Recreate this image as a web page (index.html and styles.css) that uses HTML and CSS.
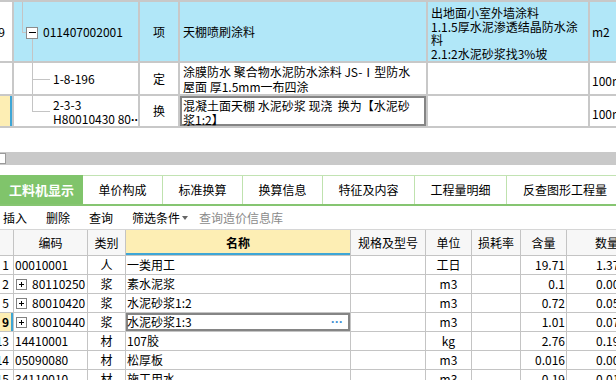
FILE: index.html
```html
<!DOCTYPE html>
<html lang="zh-CN">
<head>
    <meta charset="UTF-8">
    <meta name="viewport" content="width=device-width, initial-scale=1.0">
    <title>工料机显示</title>
    <link rel="stylesheet" href="styles.css">
</head>
<body>
    <!-- 清单 / 定额 -->
    <div class="qd-grid">
        <div class="cell rn">19</div>
        <div class="cell blue tree-cell">
            <svg class="tree" width="29" height="59">
                <line x1="8.5" y1="0" x2="8.5" y2="30.5" stroke="#c4c4c4"/>
                <line x1="8" y1="30.5" x2="12" y2="30.5" stroke="#c4c4c4"/>
                <line x1="18.5" y1="36.5" x2="18.5" y2="59" stroke="#c4c4c4"/>
                <rect x="12.5" y="25.5" width="11" height="11" fill="#fff" stroke="#8c8c8c"/>
                <line x1="15" y1="30.5" x2="22" y2="30.5" stroke="#000"/>
            </svg>
            <span>011407002001</span>
        </div>
        <div class="cell blue center">项</div>
        <div class="cell blue">天棚喷刷涂料</div>
        <div class="cell blue feature">
            <div class="lines">
                <div>出地面小室外墙涂料</div>
                <div>1.1.5厚水泥渗透结晶防水涂</div>
                <div>料</div>
                <div>2.1:2水泥砂浆找3%坡</div>
            </div>
        </div>
        <div class="cell blue unit">m2</div>

        <div class="cell rn"></div>
        <div class="cell tree-cell">
            <svg class="tree" width="39" height="31">
                <line x1="18.5" y1="0" x2="18.5" y2="31" stroke="#c4c4c4"/>
                <line x1="18" y1="16.5" x2="36" y2="16.5" stroke="#c4c4c4"/>
            </svg>
            <span>1-8-196</span>
        </div>
        <div class="cell center">定</div>
        <div class="cell desc">
            <div class="lines">
                <div>涂膜防水 聚合物水泥防水涂料 JS-Ⅰ型防水</div>
                <div>屋面 厚1.5mm一布四涂</div>
            </div>
        </div>
        <div class="cell"></div>
        <div class="cell unit low">100m2</div>

        <div class="cell rn current"></div>
        <div class="cell tree-cell">
            <svg class="tree" width="39" height="30">
                <line x1="18.5" y1="0" x2="18.5" y2="15.5" stroke="#c4c4c4"/>
                <line x1="18" y1="15.5" x2="36" y2="15.5" stroke="#c4c4c4"/>
            </svg>
            <div class="lines two">
                <div>2-3-3</div>
                <div>H80010430 80<span class="dots">···</span></div>
            </div>
        </div>
        <div class="cell center">换</div>
        <div class="cell desc focus">
            <div class="lines two">
                <div>混凝土面天棚 水泥砂浆 现浇&nbsp; 换为【水泥砂</div>
                <div>浆1:2】</div>
            </div>
        </div>
        <div class="cell"></div>
        <div class="cell unit low">100m2</div>
    </div>

    <div class="hscroll"><span class="thumb"></span></div>

    <div class="tabs">
        <div class="tab active">工料机显示</div>
        <div class="tab">单价构成</div>
        <div class="tab">标准换算</div>
        <div class="tab">换算信息</div>
        <div class="tab wide">特征及内容</div>
        <div class="tab wide">工程量明细</div>
        <div class="tab wider">反查图形工程量</div>
    </div>

    <div class="toolbar">
        <span class="tool">插入</span>
        <span class="tool">删除</span>
        <span class="tool">查询</span>
        <span class="tool filter">筛选条件<i class="caret"></i></span>
        <span class="tool muted">查询造价信息库</span>
    </div>

    <!-- 工料机 -->
    <div class="glj-grid">
        <div class="h"></div>
        <div class="h">编码</div>
        <div class="h">类别</div>
        <div class="h name-h">名称</div>
        <div class="h">规格及型号</div>
        <div class="h">单位</div>
        <div class="h">损耗率</div>
        <div class="h">含量</div>
        <div class="h">数量</div>

        <div class="d rn">1</div>
        <div class="d code">00010001</div>
        <div class="d c">人</div>
        <div class="d name">一类用工</div>
        <div class="d"></div>
        <div class="d c">工日</div>
        <div class="d"></div>
        <div class="d r">19.71</div>
        <div class="d qty">1.379</div>

        <div class="d rn">2</div>
        <div class="d code"><svg class="plus" width="11" height="11"><rect x="0.5" y="0.5" width="10" height="10" fill="#fff" stroke="#808080"/><line x1="3" y1="5.5" x2="8" y2="5.5" stroke="#000"/><line x1="5.5" y1="3" x2="5.5" y2="8" stroke="#000"/></svg>80110250</div>
        <div class="d c">浆</div>
        <div class="d name">素水泥浆</div>
        <div class="d"></div>
        <div class="d c">m3</div>
        <div class="d"></div>
        <div class="d r">0.1</div>
        <div class="d qty">0.007</div>

        <div class="d rn">5</div>
        <div class="d code"><svg class="plus" width="11" height="11"><rect x="0.5" y="0.5" width="10" height="10" fill="#fff" stroke="#808080"/><line x1="3" y1="5.5" x2="8" y2="5.5" stroke="#000"/><line x1="5.5" y1="3" x2="5.5" y2="8" stroke="#000"/></svg>80010420</div>
        <div class="d c">浆</div>
        <div class="d name">水泥砂浆1:2</div>
        <div class="d"></div>
        <div class="d c">m3</div>
        <div class="d"></div>
        <div class="d r">0.72</div>
        <div class="d qty">0.050</div>

        <div class="d rn current">9</div>
        <div class="d code"><svg class="plus" width="11" height="11"><rect x="0.5" y="0.5" width="10" height="10" fill="#fff" stroke="#808080"/><line x1="3" y1="5.5" x2="8" y2="5.5" stroke="#000"/><line x1="5.5" y1="3" x2="5.5" y2="8" stroke="#000"/></svg>80010440</div>
        <div class="d c">浆</div>
        <div class="d name focus">水泥砂浆1:3<span class="more">···</span></div>
        <div class="d"></div>
        <div class="d c">m3</div>
        <div class="d"></div>
        <div class="d r">1.01</div>
        <div class="d qty">0.071</div>

        <div class="d rn">13</div>
        <div class="d code">14410001</div>
        <div class="d c">材</div>
        <div class="d name">107胶</div>
        <div class="d"></div>
        <div class="d c">kg</div>
        <div class="d"></div>
        <div class="d r">2.76</div>
        <div class="d qty">0.193</div>

        <div class="d rn">14</div>
        <div class="d code">05090080</div>
        <div class="d c">材</div>
        <div class="d name">松厚板</div>
        <div class="d"></div>
        <div class="d c">m3</div>
        <div class="d"></div>
        <div class="d r">0.016</div>
        <div class="d qty">0.001</div>

        <div class="d rn">15</div>
        <div class="d code">34110010</div>
        <div class="d c">材</div>
        <div class="d name">施工用水</div>
        <div class="d"></div>
        <div class="d c">m3</div>
        <div class="d"></div>
        <div class="d r">0.19</div>
        <div class="d qty">0.013</div>
    </div>
</body>
</html>
```

FILE: styles.css
```css
* {
    box-sizing: border-box;
}
body {
    margin: 0;
    width: 616px;
    height: 380px;
    overflow: hidden;
    background: #fff;
    color: #000;
    font-family: "Noto Sans CJK SC", "Liberation Sans", sans-serif;
    font-size: 12px;
    line-height: 14px;
}

/* top grid */
.qd-grid {
    display: grid;
    grid-template-columns: 12px 124px 38px 246px 160px 40px;
    grid-template-rows: 59px 31px 30px;
    gap: 2px;
    padding: 2px 0;
    width: max-content;
    background: #c8c8c8;
}
.cell {
    display: flex;
    align-items: center;
    min-width: 0;
    overflow: hidden;
    white-space: nowrap;
    padding: 0 3px;
    background: #fff;
}
.cell.blue {
    background: #b1e7f8;
}
.cell.center {
    justify-content: center;
}
.cell.rn {
    justify-content: flex-end;
    padding: 0 7px 0 0;
}
.cell.rn.current {
    background: #fdeeb4;
    box-shadow: inset -2px 0 0 #3ea6d6;
}
.tree-cell {
    padding: 0;
}
.tree {
    display: block;
    flex-shrink: 0;
}
.lines.two {
    padding-top: 3px;
}
.dots {
    font-family: "Liberation Sans", sans-serif;
    font-weight: bold;
    letter-spacing: -0.5px;
}
.feature {
    align-items: flex-start;
    padding-top: 4px;
    line-height: 13.5px;
}
.desc .lines {
    line-height: 15px;
}
.desc .lines.two {
    line-height: 14px;
}
.cell.focus {
    box-shadow: inset 0 0 0 2px #858585;
}
.unit {
    padding-left: 2px;
}
.unit.low {
    padding-top: 5px;
}

/* scrollbar */
.hscroll {
    display: flex;
    align-items: center;
    height: 13px;
    margin-top: 24px;
    background: #c9c9c9;
}
.thumb {
    width: 6px;
    height: 11px;
    background: #fff;
    border: 1px solid #9a9a9a;
    border-left: none;
}

/* tabs */
.tabs {
    display: flex;
    height: 31px;
    margin-top: 10px;
    border-top: 1px solid #c2e3b3;
    border-bottom: 2px solid #86c571;
}
.tab {
    display: flex;
    align-items: center;
    justify-content: center;
    flex-shrink: 0;
    width: 80px;
    border-right: 1px solid #bfe2ae;
    font-size: 12px;
}
.tab.wide {
    width: 92px;
}
.tab.wider {
    width: 116px;
    border-right: none;
}
.tab.active {
    width: 83px;
    margin-top: -1px;
    background: #80c46b;
    color: #fff;
    font-size: 13px;
    font-weight: bold;
    border-right: none;
}

/* toolbar */
.toolbar {
    display: flex;
    align-items: center;
    height: 24px;
    padding-left: 3px;
    border-bottom: 1px solid #d6d6d6;
}
.tool {
    margin-right: 19px;
}
.tool.filter {
    display: flex;
    align-items: center;
    margin-right: 11px;
}
.caret {
    width: 0;
    height: 0;
    margin-left: 2px;
    margin-top: 1px;
    border-left: 3px solid transparent;
    border-right: 3px solid transparent;
    border-top: 4px solid #666;
}
.tool.muted {
    color: #8a8a8a;
}

/* bottom grid */
.glj-grid {
    display: grid;
    grid-template-columns: 13px 73px 37px 224px 74px 45px 48px 45px 80px;
    grid-template-rows: 25px repeat(7, 18px);
    gap: 1px;
    width: max-content;
    background: #c4c4c4;
}
.h {
    display: flex;
    align-items: center;
    justify-content: center;
    white-space: nowrap;
    overflow: hidden;
    background: #f7f7f7;
}
.h.name-h {
    background: #fdeeb4;
    font-weight: bold;
    box-shadow: inset 0 -2px 0 #3ea6d6;
}
.d {
    display: flex;
    align-items: center;
    min-width: 0;
    overflow: hidden;
    white-space: nowrap;
    background: #fff;
}
.d.rn {
    justify-content: flex-end;
    padding-right: 4px;
}
.d.rn.current {
    background: #fdeeb4;
    font-weight: bold;
    box-shadow: inset -2px 0 0 #3ea6d6;
}
.d.code {
    padding-left: 1px;
}
.plus {
    display: block;
    flex-shrink: 0;
    margin: 0 5px 0 1px;
}
.d.c {
    justify-content: center;
}
.d.r {
    justify-content: flex-end;
    padding-right: 1px;
}
.d.name {
    padding-left: 1px;
}
.d.name.focus {
    justify-content: space-between;
    padding-right: 7px;
    box-shadow: inset 0 0 0 2px #858585;
}
.more {
    color: #3c8dd0;
    font-family: "Liberation Sans", sans-serif;
    font-weight: bold;
}
.d.qty {
    padding-left: 29px;
}
```
